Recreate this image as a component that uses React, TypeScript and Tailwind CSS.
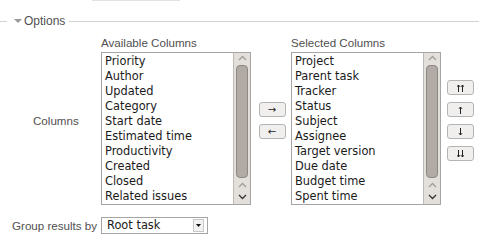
import React from 'react';

const available = [
  'Priority',
  'Author',
  'Updated',
  'Category',
  'Start date',
  'Estimated time',
  'Productivity',
  'Created',
  'Closed',
  'Related issues',
];

const selected = [
  'Project',
  'Parent task',
  'Tracker',
  'Status',
  'Subject',
  'Assignee',
  'Target version',
  'Due date',
  'Budget time',
  'Spent time',
];

function Chevron({ down, dark }: { down?: boolean; dark?: boolean }) {
  return (
    <svg width="9" height="6" viewBox="0 0 9 6" className="block">
      <polyline
        points={down ? '1,1 4.5,4.5 8,1' : '1,5 4.5,1.5 8,5'}
        fill="none"
        stroke={dark ? '#333' : '#a19d99'}
        strokeWidth="1.3"
      />
    </svg>
  );
}

function Scrollbar() {
  return (
    <div className="flex h-full w-[17px] shrink-0 flex-col items-center border-l border-[#bfbab5] bg-[#e3e0dc]">
      <div className="mt-[2px]">
        <Chevron />
      </div>
      <div className="mt-[4px] h-[113px] w-[12px] rounded-[4px] border border-[#8e8984] bg-[#b1aaa5]" />
      <div className="mt-[4px]">
        <Chevron />
      </div>
      <div className="mt-[6px]">
        <Chevron down dark />
      </div>
    </div>
  );
}

function ListBox({ items }: { items: string[] }) {
  return (
    <div className="flex h-[153px] w-[150px] overflow-hidden border border-[#a5a5a5] bg-white">
      <div className="flex-1 overflow-hidden pt-[1px] pl-[3px] font-['DejaVu_Sans'] text-[11.4px] leading-[15px] text-[#1a1a1a]">
        {items.map((item) => (
          <div key={item} className="h-[15px] whitespace-nowrap">
            {item}
          </div>
        ))}
      </div>
      <Scrollbar />
    </div>
  );
}

// vertical arrows drawn as small svgs (text glyphs fall back to emoji)
function VArrow({ down, double }: { down?: boolean; double?: boolean }) {
  const xs = double ? [1.5, 5.5] : [3.5];
  return (
    <svg width="7" height="8" viewBox="0 0 7 8" className="block">
      <g transform={down ? 'rotate(180 3.5 4)' : undefined} stroke="#222" strokeWidth="1" fill="none">
        {xs.map((x) => (
          <g key={x}>
            <line x1={x} y1="1" x2={x} y2="8" />
            <polyline points={`${x - 1.5},2.8 ${x},1 ${x + 1.5},2.8`} />
          </g>
        ))}
      </g>
    </svg>
  );
}

function ArrowButton({ children }: { children: React.ReactNode }) {
  return (
    <button className="flex h-[15px] w-[27px] items-center justify-center rounded-[3px] border border-[#b4b4b4] bg-[#f0efee] font-['DejaVu_Sans'] text-[10px] leading-none text-[#222]">
      {children}
    </button>
  );
}

export default function App() {
  return (
    <div className="h-[240px] w-[479px] overflow-hidden bg-white font-['Liberation_Sans'] text-[11.6px] text-[#505050]">
      {/* top edge of the field above */}
      <div className="ml-[92px] w-[88px] border-t border-[#e2e2e2]" />

      {/* Options legend */}
      <div className="mt-[13px] flex h-[14px] items-center">
        <div className="w-[7px] border-t border-[#d2d2d2]" />
        <svg width="8" height="6" viewBox="0 0 8 6" className="ml-[7px]">
          <polygon points="0,1 8,1 4,5" fill="#9a9a9a" />
        </svg>
        <span className="ml-[2px] text-[12px] leading-[14px] text-[#505050]">Options</span>
        <div className="ml-[4px] flex-1 border-t border-[#d2d2d2]" />
      </div>

      {/* Columns */}
      <div className="mt-[8px] flex items-center">
        <div className="w-[101px] pl-[33px]">Columns</div>
        <div className="flex flex-col">
          <div className="h-[16px] leading-[14px]">Available Columns</div>
          <ListBox items={available} />
        </div>
        <div className="flex w-[40px] flex-col items-center gap-[7px] pl-[2px]">
          <ArrowButton>→</ArrowButton>
          <ArrowButton>←</ArrowButton>
        </div>
        <div className="flex flex-col">
          <div className="h-[16px] leading-[14px]">Selected Columns</div>
          <ListBox items={selected} />
        </div>
        <div className="ml-[6px] flex flex-col gap-[7px]">
          <ArrowButton>
            <VArrow double />
          </ArrowButton>
          <ArrowButton>
            <VArrow />
          </ArrowButton>
          <ArrowButton>
            <VArrow down />
          </ArrowButton>
          <ArrowButton>
            <VArrow down double />
          </ArrowButton>
        </div>
      </div>

      {/* Group results by */}
      <div className="mt-[12px] flex items-center">
        <div className="w-[101px] pl-[12px] whitespace-nowrap">Group results by</div>
        <div className="flex h-[17px] w-[107px] items-center border border-[#a5a5a5] bg-white pl-[5px] font-['DejaVu_Sans'] text-[11.4px] text-[#1a1a1a]">
          <span className="flex-1">Root task</span>
          <div className="mr-[3px] flex h-[13px] w-[11px] items-center justify-center border border-[#c8c8c8] bg-[#f2f2f2]">
            <svg width="5" height="3" viewBox="0 0 5 3">
              <polygon points="0,0 5,0 2.5,3" fill="#111" />
            </svg>
          </div>
        </div>
      </div>
    </div>
  );
}
